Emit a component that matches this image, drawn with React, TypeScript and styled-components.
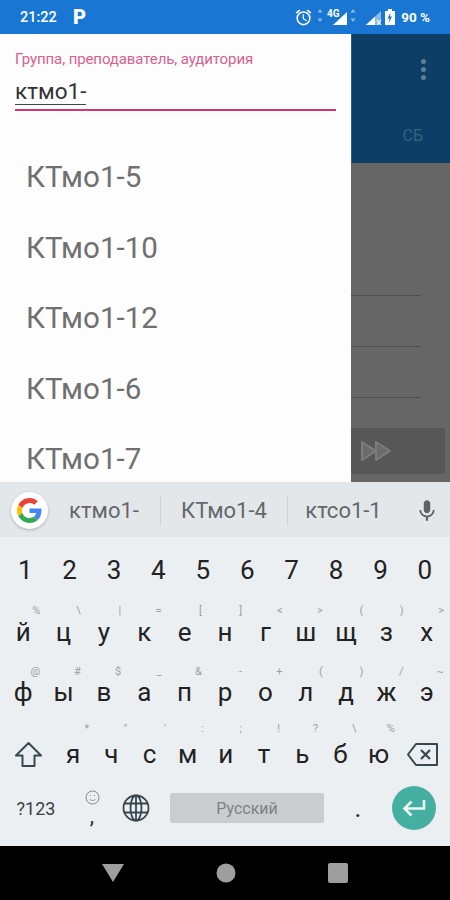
import React from "react";
import styled, { createGlobalStyle } from "styled-components";
import { MdMic, MdOutlineAlarm } from "react-icons/md";

const Global = createGlobalStyle`
  html, body { margin: 0; padding: 0; background: #000; }
  body { font-family: Roboto, "Liberation Sans", sans-serif; }
  * { box-sizing: border-box; }
`;

const Screen = styled.div`
  width: 450px;
  height: 900px;
  display: flex;
  flex-direction: column;
  overflow: hidden;
`;

/* status bar */
const StatusBar = styled.div`
  height: 34px;
  flex: none;
  background: #1976d2;
  color: #fff;
  display: flex;
  align-items: center;
  padding: 0 20px 0 20px;
`;
const Clock = styled.span`
  font-size: 14.5px;
  font-weight: 500;
  width: 53px;
`;
const ParkLetter = styled.span`
  font-size: 20px;
  font-weight: 900;
  line-height: 1;
`;
const StatusIcons = styled.div`
  margin-left: auto;
  display: flex;
  align-items: center;
`;
const Battery = styled.span`
  font-size: 13.5px;
  font-weight: 700;
  margin-left: 5px;
  white-space: nowrap;
`;

/* middle part: drawer over the dimmed app */
const Main = styled.div`
  height: 448px;
  flex: none;
  display: flex;
`;
const Drawer = styled.aside`
  width: 351px;
  flex: none;
  background: #fdfdfd;
  overflow: hidden;
`;
const SearchField = styled.div`
  margin: 17px 15px 0;
  width: 321px;
  height: 60px;
  border-bottom: 2px solid #d6336f;
`;
const FieldLabel = styled.div`
  font-size: 15px;
  line-height: 16px;
  letter-spacing: -0.1px;
  color: #d8608f;
`;
const FieldValue = styled.div`
  display: inline-block;
  margin-top: 12px;
  font-size: 22.5px;
  line-height: 25px;
  color: #333;
  border-bottom: 1px solid #444;
`;
const ResultList = styled.ul`
  list-style: none;
  margin: 31px 0 0;
  padding: 0;
`;
const ResultItem = styled.li`
  height: 70.5px;
  padding-left: 26px;
  display: flex;
  align-items: center;
  font-size: 29.6px;
  color: #707070;
`;

const Backdrop = styled.div`
  flex: 1;
  background: #666;
  display: flex;
  flex-direction: column;
`;
const AppHeader = styled.div`
  height: 129px;
  flex: none;
  background: #0d3f66;
  display: flex;
  flex-direction: column;
  align-items: flex-end;
  box-shadow: inset 1px 0 0 #365a78;
`;
const MoreDots = styled.div`
  margin: 25px 24px 0 0;
  display: flex;
  flex-direction: column;
  gap: 3px;
`;
const Dot = styled.i`
  width: 5px;
  height: 5px;
  border-radius: 50%;
  background: #617f94;
`;
const DayLabel = styled.div`
  margin: 46px 27px 0 0;
  font-size: 16px;
  color: #3c6180;
`;
const GridLines = styled.div`
  padding-top: 82px;
`;
const GridLine = styled.div`
  width: 70px;
  height: 51px;
  border-bottom: 1px solid #4e4e4e;
`;
const NextButton = styled.div`
  width: 94px;
  height: 46px;
  margin-top: 30px;
  background: #575757;
  border-radius: 2px;
  display: flex;
  align-items: center;
  padding-left: 9px;
`;

/* keyboard */
const Keyboard = styled.div`
  height: 364px;
  flex: none;
  background: #eceff1;
  display: flex;
  flex-direction: column;
`;
const SuggestBar = styled.div`
  height: 55px;
  flex: none;
  background: #e4e7ea;
  display: flex;
  align-items: center;
  padding: 2px 0 0 11px;
  font-size: 22px;
  color: #63676b;
`;
const GoogleBadge = styled.div`
  width: 37px;
  height: 37px;
  flex: none;
  border-radius: 50%;
  background: #fff;
  box-shadow: 0 1px 3px rgba(0, 0, 0, 0.25);
  display: flex;
  align-items: center;
  justify-content: center;
`;
const Suggestion = styled.div<{ $w: number; $divider?: boolean }>`
  width: ${(p) => p.$w}px;
  text-align: center;
  border-left: ${(p) => (p.$divider ? "1px solid #cfd3d6" : "none")};
  line-height: 29px;
  white-space: nowrap;
`;
const MicSlot = styled.div`
  flex: 1;
  display: flex;
  justify-content: center;
  color: #5f6368;
  padding-left: 4px;
`;
const KeyRow = styled.div<{ $h: number }>`
  height: ${(p) => p.$h}px;
  flex: none;
  display: flex;
  padding: 0 3px;
`;
const Key = styled.div<{ $w?: number }>`
  position: relative;
  flex: ${(p) => (p.$w ? `0 0 ${p.$w}px` : "1 1 0")};
  display: flex;
  align-items: center;
  justify-content: center;
  font-size: 26px;
  color: #222;
`;
const Hint = styled.span<{ $top: number }>`
  position: absolute;
  top: ${(p) => p.$top}px;
  right: 3px;
  font-size: 11px;
  line-height: 12px;
  color: #9aa0a6;
`;
const SymbolsKey = styled(Key)`
  font-size: 18px;
  color: #3c4043;
`;
const GlobeKey = styled(Key)`
  margin-right: 10px;
`;
const SpaceBar = styled.div`
  width: 154px;
  height: 30px;
  flex: none;
  background: #c9cdd0;
  border-radius: 2px;
  display: flex;
  align-items: center;
  justify-content: center;
  font-size: 16px;
  color: #7d8185;
`;
const EmojiComma = styled.div`
  display: flex;
  flex-direction: column;
  align-items: center;
  font-size: 22px;
  line-height: 1;
  color: #333;
`;
const EnterKey = styled.div`
  width: 44px;
  height: 44px;
  flex: none;
  border-radius: 50%;
  background: #45b0a2;
  display: flex;
  align-items: center;
  justify-content: center;
`;
const BottomRow = styled.div`
  height: 46px;
  flex: none;
  display: flex;
  align-items: center;
`;

/* nav bar */
const NavBar = styled.nav`
  height: 54px;
  flex: none;
  background: #000;
  display: flex;
  align-items: center;
  justify-content: center;
  gap: 92px;
`;

const digits = "1234567890".split("");
const row2 = [
  ["й", "%"], ["ц", "\\"], ["у", "|"], ["к", "="], ["е", "["], ["н", "]"],
  ["г", "<"], ["ш", ">"], ["щ", "("], ["з", ")"], ["х", ">"],
];
const row3 = [
  ["ф", "@"], ["ы", "#"], ["в", "$"], ["а", "_"], ["п", "&"], ["р", "-"],
  ["о", "+"], ["л", "("], ["д", ")"], ["ж", "/"], ["э", "~"],
];
const row4 = [
  ["я", "*"], ["ч", '"'], ["с", "'"], ["м", ":"], ["и", ";"], ["т", "!"],
  ["ь", "?"], ["б", "\\"], ["ю", "%"],
];
const results = ["КТмо1-5", "КТмо1-10", "КТмо1-12", "КТмо1-6", "КТмо1-7"];

function GoogleG() {
  return (
    <svg width="25" height="25" viewBox="0 0 48 48">
      <path fill="#EA4335" d="M24 9.500c3.500 0 6.700 1.300 9.100 3.500l6.800-6.800C35.800 2.400 30.300 0 24 0 14.600 0 6.500 5.400 2.600 13.200l7.900 6.100C12.400 13.600 17.700 9.500 24 9.500z" />
      <path fill="#4285F4" d="M46.900 24.500c0-1.600-.1-3.100-.4-4.500H24v9h12.900c-.6 3-2.200 5.500-4.700 7.200l7.700 6c4.500-4.200 7-10.300 7-17.700z" />
      <path fill="#FBBC05" d="M10.500 28.700c-.5-1.500-.8-3-.8-4.700s.3-3.200.8-4.700l-7.900-6.100C.9 16.500 0 20.100 0 24s.9 7.500 2.600 10.800l7.900-6.100z" />
      <path fill="#34A853" d="M24 48c6.500 0 11.900-2.100 15.900-5.800l-7.700-6c-2.100 1.400-4.900 2.300-8.200 2.300-6.300 0-11.600-4.200-13.500-9.800l-7.900 6.100C6.500 42.600 14.600 48 24 48z" />
    </svg>
  );
}

export default function App() {
  return (
    <Screen>
      <Global />
      <StatusBar>
        <Clock>21:22</Clock>
        <ParkLetter>P</ParkLetter>
        <StatusIcons>
          <MdOutlineAlarm size={19} />
          <svg width="83" height="24" viewBox="0 0 83 24">
            <path d="M7 4l2.500 3.500h-5zM7 17l2.500-3.500h-5z" fill="#8dbbe9" />
            <text x="14" y="12" fontSize="10" fontWeight="700" fill="#fff" fontFamily="Roboto">4G</text>
            <path d="M20 20L34 7v13z" fill="#fff" />
            <path d="M40 4l2.500 3.500h-5zM40 17l2.500-3.500h-5z" fill="#8dbbe9" />
            <path d="M53 20L68 6v14z" fill="#8dbbe9" />
            <path d="M53 20l9-8.400V20z" fill="#fff" />
            <path d="M64 15l4 5M68 15l-4 5" stroke="#fff" strokeWidth="1.200" />
            <path d="M72 6h3V4h4v2h3v14H72z" fill="#fff" />
            <path d="M77.500 7.500l-3 6h2l-1 5 3.500-7h-2z" fill="#1976d2" />
          </svg>
          <Battery>90 %</Battery>
        </StatusIcons>
      </StatusBar>

      <Main>
        <Drawer>
          <SearchField>
            <FieldLabel>Группа, преподаватель, аудитория</FieldLabel>
            <FieldValue>ктмо1-</FieldValue>
          </SearchField>
          <ResultList>
            {results.map((r) => (
              <ResultItem key={r}>{r}</ResultItem>
            ))}
          </ResultList>
        </Drawer>
        <Backdrop>
          <AppHeader>
            <MoreDots>
              <Dot />
              <Dot />
              <Dot />
            </MoreDots>
            <DayLabel>СБ</DayLabel>
          </AppHeader>
          <GridLines>
            <GridLine />
            <GridLine />
            <GridLine />
          </GridLines>
          <NextButton>
            <svg width="32" height="24" viewBox="0 0 32 24" fill="#6b6b6b" stroke="#7d7d7d" strokeWidth="2" strokeLinejoin="round">
              <path d="M2 3l14 9-14 9z" />
              <path d="M16 3l14 9-14 9z" />
            </svg>
          </NextButton>
        </Backdrop>
      </Main>

      <Keyboard>
        <SuggestBar>
          <GoogleBadge>
            <GoogleG />
          </GoogleBadge>
          <Suggestion $w={112}>ктмо1-</Suggestion>
          <Suggestion $w={127} $divider>КТмо1-4</Suggestion>
          <Suggestion $w={112} $divider>ктсо1-1</Suggestion>
          <MicSlot>
            <MdMic size={26} />
          </MicSlot>
        </SuggestBar>
        <KeyRow $h={66}>
          {digits.map((d) => (
            <Key key={d}>{d}</Key>
          ))}
        </KeyRow>
        <KeyRow $h={58}>
          {row2.map(([k, h]) => (
            <Key key={k}>
              {k}
              <Hint $top={2}>{h}</Hint>
            </Key>
          ))}
        </KeyRow>
        <KeyRow $h={62}>
          {row3.map(([k, h]) => (
            <Key key={k}>
              {k}
              <Hint $top={5}>{h}</Hint>
            </Key>
          ))}
        </KeyRow>
        <KeyRow $h={62}>
          <Key $w={51}>
            <svg width="29" height="27" viewBox="0 0 29 27" fill="none" stroke="#37474f" strokeWidth="2" strokeLinejoin="round">
              <path d="M14.500 2L2 14.500h6.500V25h12V14.500H27z" />
            </svg>
          </Key>
          {row4.map(([k, h]) => (
            <Key key={k} $w={38.2}>
              {k}
              <Hint $top={0}>{h}</Hint>
            </Key>
          ))}
          <Key>
            <svg width="33" height="25" viewBox="0 0 33 25" fill="none" stroke="#37474f" strokeWidth="2" strokeLinejoin="round">
              <path d="M10 2h21v21H10L2 12.500z" />
              <path d="M15 8l9 9M24 8l-9 9" strokeWidth="2.200" />
            </svg>
          </Key>
        </KeyRow>
        <BottomRow>
          <SymbolsKey $w={72}>?123</SymbolsKey>
          <Key $w={40}>
            <EmojiComma>
              <svg width="15" height="15" viewBox="0 0 15 15" fill="none" stroke="#888" strokeWidth="1">
                <circle cx="7.500" cy="7.500" r="6.500" />
                <path d="M4.500 9c1.500 2 4.500 2 6 0M5 5.500h1M9 5.500h1" />
              </svg>
              ,
            </EmojiComma>
          </Key>
          <GlobeKey $w={48}>
            <svg width="28" height="28" viewBox="0 0 28 28" fill="none" stroke="#37474f" strokeWidth="1.800">
              <circle cx="14" cy="14" r="12.500" />
              <ellipse cx="14" cy="14" rx="5.500" ry="12.500" />
              <path d="M2 9.500h24M2 18.500h24M14 1.500v25" />
            </svg>
          </GlobeKey>
          <SpaceBar>Русский</SpaceBar>
          <Key $w={68}>.</Key>
          <EnterKey>
            <svg width="26" height="20" viewBox="0 0 26 20" fill="none" stroke="#eef7f5" strokeWidth="2.600">
              <path d="M23 2v8.500H4M10.500 3.500L3.500 10.500l7 7" />
            </svg>
          </EnterKey>
        </BottomRow>
      </Keyboard>

      <NavBar>
        <svg width="22" height="18" viewBox="0 0 22 18">
          <path d="M0 0h22L11 18z" fill="#9e9e9e" />
        </svg>
        <svg width="20" height="20" viewBox="0 0 20 20">
          <circle cx="10" cy="10" r="9.500" fill="#9e9e9e" />
        </svg>
        <svg width="20" height="20" viewBox="0 0 20 20">
          <rect width="20" height="20" rx="2" fill="#9e9e9e" />
        </svg>
      </NavBar>
    </Screen>
  );
}
